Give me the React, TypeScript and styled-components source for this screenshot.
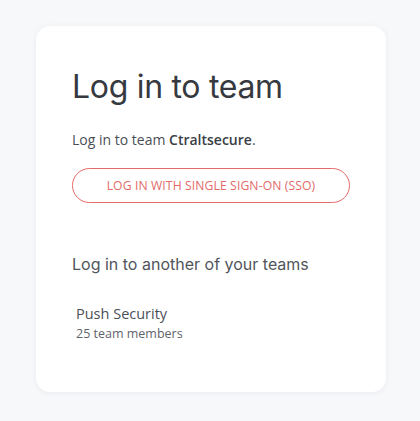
import React from 'react';
import styled, { createGlobalStyle } from 'styled-components';

const GlobalStyle = createGlobalStyle`
  html, body {
    margin: 0;
    padding: 0;
    background: #f7f8fa;
  }
  body {
    font-family: "Open Sans", "Noto Sans", sans-serif;
  }
`;

// Page wrapper holding the card
const Page = styled.div`
  width: 420px;
  height: 421px;
  padding: 26px 0 0 36px;
  box-sizing: border-box;
`;

const Card = styled.div`
  width: 350px;
  height: 366px;
  box-sizing: border-box;
  padding: 42px 36px 0 36px;
  background: #fff;
  border-radius: 14px;
  box-shadow: 0 1px 6px rgba(30, 40, 60, 0.06);
  display: flex;
  flex-direction: column;
`;

const Title = styled.h1`
  margin: 0;
  font-family: Inter, "Liberation Sans", sans-serif;
  font-weight: 400;
  font-size: 32px;
  line-height: 38px;
  color: #363a40;
  letter-spacing: -0.3px;
`;

const Intro = styled.p`
  margin: 24px 0 0 0;
  font-size: 14px;
  line-height: 20px;
  color: #4a4f57;

  strong {
    font-weight: 600;
    color: #3a3e45;
  }
`;

const SsoButton = styled.button`
  margin-top: 18px;
  height: 35px;
  width: 278px;
  border: 1px solid #e46a6a;
  border-radius: 18px;
  background: #fff;
  color: #e26a68;
  font-family: "Open Sans", "Noto Sans", sans-serif;
  font-size: 12.2px;
  letter-spacing: 0.1px;
  text-transform: uppercase;
  cursor: pointer;
`;

const SectionTitle = styled.h2`
  margin: 50px 0 0 0;
  font-family: Inter, "Liberation Sans", sans-serif;
  font-weight: 400;
  font-size: 16px;
  line-height: 22px;
  color: #50555c;
`;

const TeamItem = styled.div`
  margin-top: 29px;
  padding-left: 4px;
  display: flex;
  flex-direction: column;
`;

const TeamName = styled.span`
  font-size: 14.5px;
  line-height: 20px;
  color: #4a4f57;
`;

const TeamMeta = styled.span`
  font-size: 12.5px;
  line-height: 20px;
  color: #5f646b;
`;

export default function App() {
  return (
    <>
      <GlobalStyle />
      <Page>
        <Card>
          <Title>Log in to team</Title>
          <Intro>
            Log in to team <strong>Ctraltsecure</strong>.
          </Intro>
          <SsoButton>Log in with single sign-on (SSO)</SsoButton>
          <SectionTitle>Log in to another of your teams</SectionTitle>
          <TeamItem>
            <TeamName>Push Security</TeamName>
            <TeamMeta>25 team members</TeamMeta>
          </TeamItem>
        </Card>
      </Page>
    </>
  );
}
